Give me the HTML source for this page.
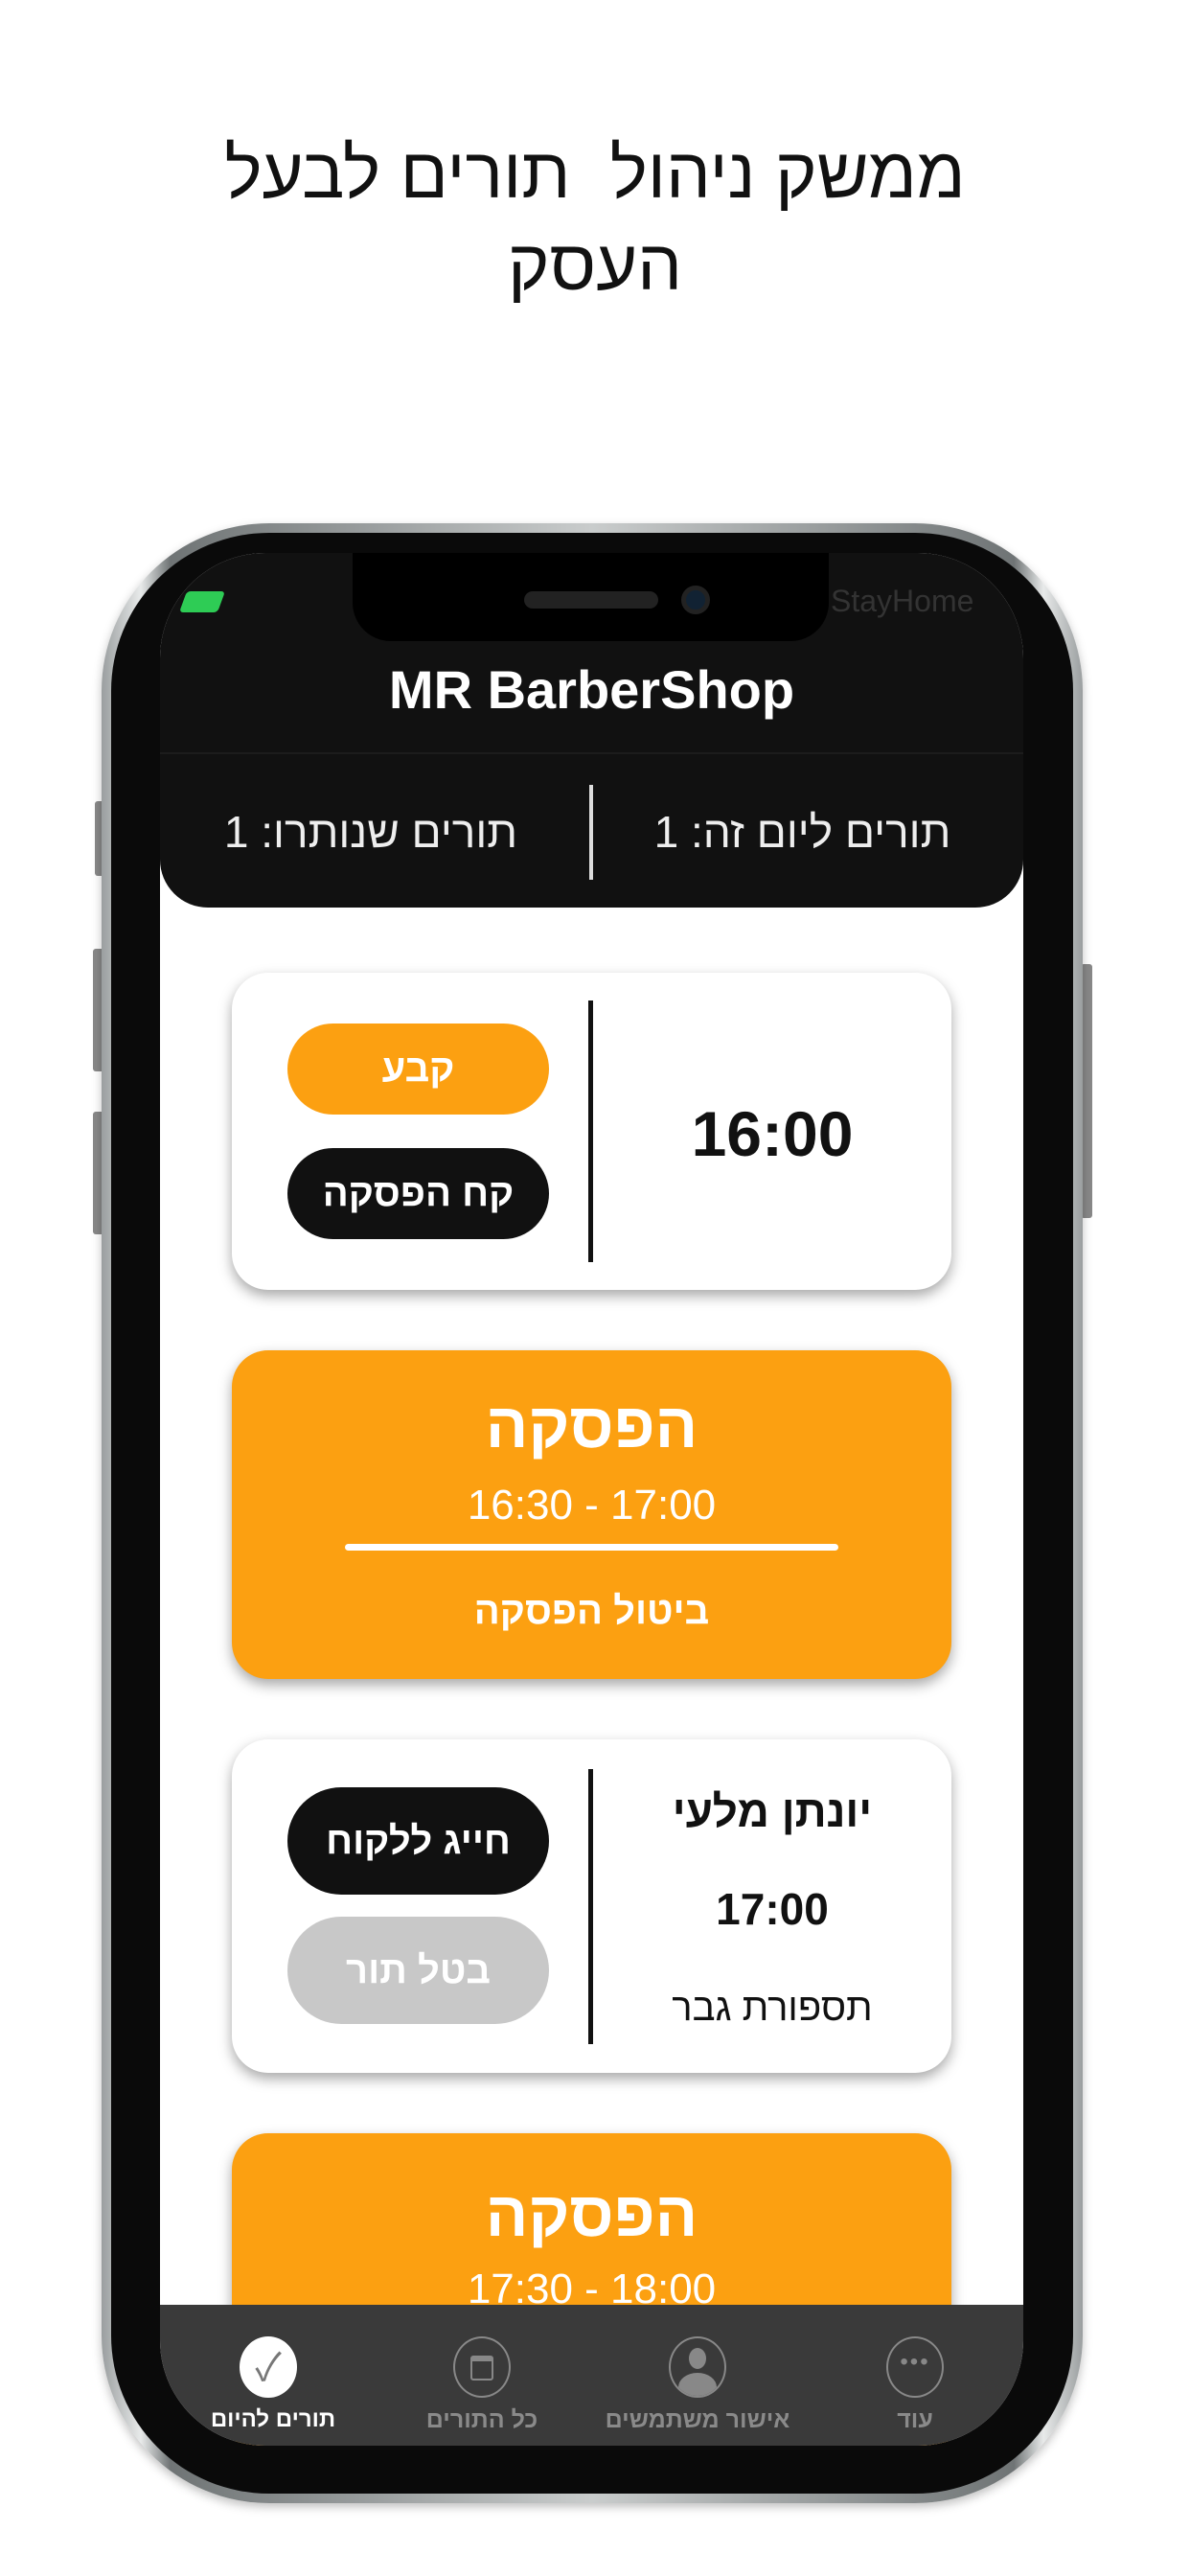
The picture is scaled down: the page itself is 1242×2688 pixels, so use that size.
<!DOCTYPE html>
<html><head><meta charset="utf-8"><style>
*{margin:0;padding:0;box-sizing:border-box}
body{width:1242px;height:2688px;background:#fff;position:relative;overflow:hidden;font-family:"Liberation Sans","Noto Sans CJK SC",sans-serif}
.abs{position:absolute}
.t{position:absolute;left:0;width:1242px;text-align:center;color:#111;font-size:74px;direction:rtl}
.phone{left:106px;top:546px;width:1024px;height:2066px;border-radius:175px;background:linear-gradient(90deg,#9a9e9f,#e8eaea 4%,#6f7475 7%,#c9cccc 50%,#6f7475 93%,#e8eaea 96%,#9a9e9f);box-shadow:0 4px 10px rgba(0,0,0,.25)}
.body{left:116px;top:556px;width:1004px;height:2046px;border-radius:165px;background:#0a0a0a}
.screen{left:167px;top:577px;width:901px;height:1975px;border-radius:110px;background:#fff;overflow:hidden}
.hdr{left:0;top:0;width:901px;height:370px;background:#111;border-radius:0 0 50px 50px}
.card{position:absolute;left:75px;width:751px;border-radius:38px;background:#fff;box-shadow:0 6px 14px rgba(0,0,0,.35)}
.or{background:#fca011}
.btn{position:absolute;left:58px;width:273px;height:95px;border-radius:48px;color:#fff;font-weight:bold;font-size:40px;text-align:center;line-height:95px;direction:rtl}
.c{position:absolute;text-align:center;direction:rtl}
.ltr{direction:ltr}
.tab{position:absolute;top:1828px;left:0;width:901px;height:147px;background:#3a3a3a}
.ic{position:absolute;top:33px;width:60px;height:64px;border-radius:50%;border:2px solid #888}
.lb{position:absolute;top:106px;width:220px;text-align:center;font-size:25px;font-weight:bold;color:#8a8a8a;direction:rtl;white-space:nowrap}
</style></head><body>
<div class="t" style="top:138px">ממשק ניהול&nbsp; תורים לבעל</div>
<div class="t" style="top:234px">העסק</div>

<div class="abs" style="left:99px;top:836px;width:10px;height:78px;background:#888;border-radius:3px"></div>
<div class="abs" style="left:97px;top:990px;width:12px;height:128px;background:#888;border-radius:3px"></div>
<div class="abs" style="left:97px;top:1160px;width:12px;height:128px;background:#888;border-radius:3px"></div>
<div class="abs" style="left:1128px;top:1006px;width:12px;height:265px;background:#888;border-radius:3px"></div>

<div class="abs phone"></div>
<div class="abs body"></div>
<div class="abs screen">
  <div class="abs hdr"></div>
  <div class="abs" style="left:201px;top:0;width:497px;height:92px;background:#000;border-radius:0 0 40px 40px"></div>
  <div class="abs" style="left:380px;top:40px;width:140px;height:18px;background:#222;border-radius:9px"></div>
  <div class="abs" style="left:544px;top:34px;width:30px;height:30px;background:#123;border-radius:50%;border:5px solid #222"></div>
  <div class="abs" style="left:24px;top:40px;width:40px;height:22px;background:#2ecc55;border-radius:4px;transform:skewX(-20deg)"></div>
  <div class="abs" style="left:700px;top:32px;font-size:32px;color:#333">StayHome</div>
  <div class="abs" style="left:0;top:110px;width:901px;text-align:center;color:#fff;font-weight:bold;font-size:56px">MR BarberShop</div>
  <div class="abs" style="left:0;top:208px;width:901px;height:2px;background:#1c1c1c"></div>
  <div class="abs" style="left:448px;top:242px;width:4px;height:99px;background:#ddd"></div>
  <div class="c" style="left:440px;width:461px;top:264px;color:#eee;font-size:46px">תורים ליום זה: 1</div>
  <div class="c" style="left:0;width:440px;top:264px;color:#eee;font-size:46px">תורים שנותרו: 1</div>

  <div class="card" style="top:438px;height:331px">
    <div class="abs" style="left:372px;top:29px;width:5px;height:273px;background:#111"></div>
    <div class="c ltr" style="left:377px;width:374px;top:130px;font-size:66px;font-weight:bold;color:#111">16:00</div>
    <div class="btn or" style="top:53px">קבע</div>
    <div class="btn" style="top:183px;background:#111">קח הפסקה</div>
  </div>

  <div class="card or" style="top:832px;height:343px">
    <div class="c" style="left:0;width:751px;top:40px;font-size:66px;font-weight:bold;color:#fff">הפסקה</div>
    <div class="c ltr" style="left:0;width:751px;top:137px;font-size:44px;color:#fff">16:30 - 17:00</div>
    <div class="abs" style="left:118px;top:202px;width:515px;height:7px;background:#fff;border-radius:4px"></div>
    <div class="c" style="left:0;width:751px;top:250px;font-size:40px;font-weight:bold;color:#fff">ביטול הפסקה</div>
  </div>

  <div class="card" style="top:1238px;height:348px">
    <div class="abs" style="left:372px;top:31px;width:5px;height:287px;background:#111"></div>
    <div class="c" style="left:377px;width:374px;top:48px;font-size:46px;font-weight:bold;color:#111">יונתן מלעי</div>
    <div class="c ltr" style="left:377px;width:374px;top:150px;font-size:46px;font-weight:bold;color:#111">17:00</div>
    <div class="c" style="left:377px;width:374px;top:258px;font-size:40px;color:#111">תספורת גבר</div>
    <div class="btn" style="top:50px;height:112px;line-height:112px;border-radius:56px;background:#111">חייג ללקוח</div>
    <div class="btn" style="top:185px;height:112px;line-height:112px;border-radius:56px;background:#c8c8c8">בטל תור</div>
  </div>

  <div class="card or" style="top:1649px;height:343px">
    <div class="c" style="left:0;width:751px;top:46px;font-size:66px;font-weight:bold;color:#fff">הפסקה</div>
    <div class="c ltr" style="left:0;width:751px;top:138px;font-size:44px;color:#fff">17:30 - 18:00</div>
  </div>

  <div class="tab">
    <div class="ic" style="left:83px;background:#fff;border-color:#fff;color:#777;font-size:40px;text-align:center;line-height:62px">✓</div>
    <div class="ic" style="left:306px"><div class="abs" style="left:16px;top:18px;width:24px;height:26px;border:2px solid #888;border-top:6px solid #888;border-radius:3px"></div></div>
    <div class="ic" style="left:531px;overflow:hidden"><div class="abs" style="left:19px;top:10px;width:18px;height:22px;border-radius:50%;background:#888"></div><div class="abs" style="left:8px;top:36px;width:40px;height:30px;border-radius:50% 50% 0 0;background:#888"></div></div>
    <div class="ic" style="left:758px;color:#888;font-size:24px;text-align:center;line-height:50px;letter-spacing:2px">•••</div>
    <div class="lb" style="left:8px;color:#fff;font-size:24px">תורים להיום</div>
    <div class="lb" style="left:226px">כל התורים</div>
    <div class="lb" style="left:451px">אישור משתמשים</div>
    <div class="lb" style="left:678px">עוד</div>
  </div>
</div>
</body></html>
